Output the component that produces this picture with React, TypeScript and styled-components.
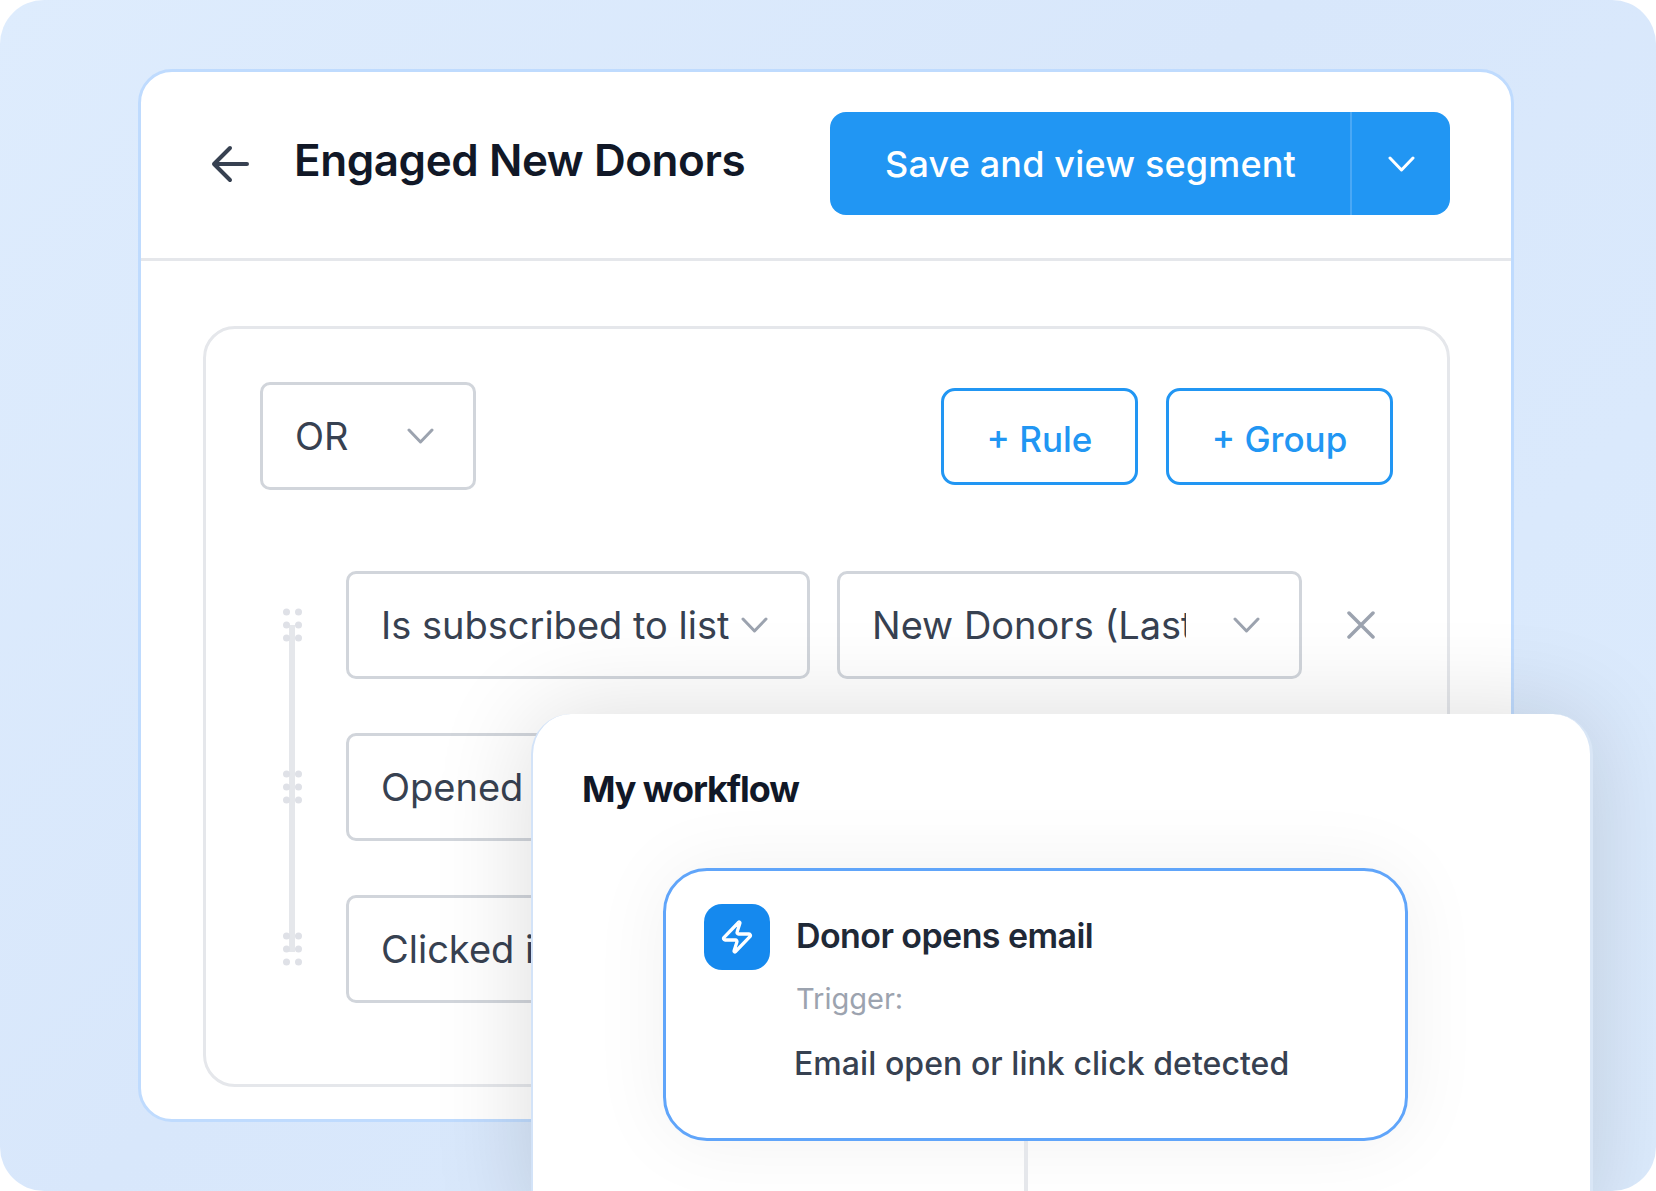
import React from 'react';
import styled, { createGlobalStyle } from 'styled-components';
import { Zap } from 'lucide-react';

const GlobalStyle = createGlobalStyle`
  html, body {
    margin: 0;
    padding: 0;
    background: #fff;
  }

  * {
    box-sizing: border-box;
  }
`;

const Page = styled.div`
  position: relative;
  width: 1656px;
  height: 1191px;
  padding: 69px 142px 0 138px;
  overflow: hidden;
  border-radius: 44px;
  background: linear-gradient(135deg, #deecfd 0%, #d8e7fb 45%, #dcebfd 100%);
  font-family: Inter, 'Noto Sans', sans-serif;
`;

const Card = styled.div`
  width: 1376px;
  height: 1053px;
  background: #fff;
  border: 3px solid #bfdbfe;
  border-radius: 34px;
`;

const Header = styled.header`
  height: 189px;
  display: flex;
  align-items: center;
  padding: 0 61px 3px 70px;
  border-bottom: 3px solid #e5e7eb;
`;

const BackIcon = styled.svg`
  width: 38px;
  height: 38px;
  flex: none;
  margin-right: 45px;
  color: #374151;
`;

const Title = styled.h1`
  margin: 0 0 8px;
  font-size: 44px;
  font-weight: 600;
  letter-spacing: -0.01em;
  color: #111827;
`;

const SplitButton = styled.div`
  display: flex;
  width: 620px;
  height: 103px;
  margin-left: auto;
  border-radius: 16px;
  background: #2196f3;
  color: #fff;
`;

const SplitLabel = styled.div`
  flex: 1;
  display: flex;
  align-items: center;
  padding-left: 55px;
  border-right: 2px solid #4aa8f5;
  font-size: 36px;
  font-weight: 500;
  letter-spacing: 0.17px;
`;

const SplitCaret = styled.div`
  width: 98px;
  display: flex;
  align-items: center;
  justify-content: center;
`;

const Body = styled.div`
  padding: 65px 61px 0 62px;
`;

const Panel = styled.section`
  height: 761px;
  padding: 53px 54px 0;
  border: 3px solid #e5e7eb;
  border-radius: 32px;
`;

const Toolbar = styled.div`
  display: flex;
  align-items: center;
  justify-content: space-between;
  margin-bottom: 81px;
`;

const Select = styled.div<{ $width: number }>`
  display: flex;
  align-items: center;
  justify-content: space-between;
  flex: none;
  width: ${(p) => p.$width}px;
  height: 108px;
  padding: 0 39px 0 32px;
  background: #fff;
  border: 3px solid #d1d5db;
  border-radius: 10px;
  font-size: 38px;
  color: #374151;
`;

const SelectText = styled.span<{ $clip?: number }>`
  display: block;
  white-space: nowrap;
  overflow: hidden;
  ${(p) => (p.$clip ? `width: ${p.$clip}px;` : '')}
`;

const ActionGroup = styled.div`
  display: flex;
  gap: 28px;
`;

const OutlineButton = styled.button<{ $width: number }>`
  width: ${(p) => p.$width}px;
  height: 97px;
  padding: 5px 0 0;
  background: #fff;
  border: 3px solid #2196f3;
  border-radius: 14px;
  font-family: inherit;
  font-size: 35px;
  font-weight: 500;
  color: #2196f3;
`;

const RuleList = styled.div`
  position: relative;
  display: flex;
  flex-direction: column;
  gap: 54px;
  padding-left: 23px;

  &::before {
    content: '';
    position: absolute;
    left: 29px;
    top: 54px;
    width: 6px;
    height: 327px;
    background: #e5e7eb;
  }
`;

const Row = styled.div`
  display: flex;
  align-items: center;
  gap: 27px;
`;

const Grip = styled.svg`
  position: relative;
  flex: none;
  width: 19px;
  height: 34px;
  margin-right: 17px;
  fill: #dfe1e7;
`;

const Close = styled.svg`
  flex: none;
  width: 28px;
  height: 28px;
  margin-left: 18px;
  color: #9ca3af;
`;

const Overlay = styled.section`
  position: absolute;
  left: 531px;
  top: 714px;
  width: 1062px;
  height: 520px;
  padding: 53px 0 0 49px;
  background: #fff;
  border-left: 2px solid #d3e3f8;
  border-right: 3px solid #d9e6f6;
  border-radius: 40px;
  box-shadow: 0 0 100px rgba(0, 0, 0, 0.14);
`;

const OverlayTitle = styled.h2`
  margin: 0 0 57px;
  font-size: 36px;
  line-height: 44px;
  font-weight: 700;
  letter-spacing: -0.03em;
  color: #111827;
`;

const Node = styled.div`
  display: flex;
  gap: 26px;
  width: 745px;
  height: 273px;
  margin-left: 81px;
  padding: 33px 38px;
  background: #fff;
  border: 3px solid #60a5fa;
  border-radius: 44px;
  box-shadow: 0 0 80px rgba(0, 0, 0, 0.06);
`;

const NodeIcon = styled.div`
  flex: none;
  width: 66px;
  height: 66px;
  display: flex;
  align-items: center;
  justify-content: center;
  border-radius: 18px;
  background: #1589ee;
  color: #fff;
`;

const NodeText = styled.div`
  display: flex;
  flex-direction: column;
`;

const NodeTitle = styled.div`
  margin-top: -1px;
  font-size: 34px;
  line-height: 66px;
  font-weight: 600;
  letter-spacing: -0.017em;
  color: #1f2937;
`;

const NodeLabel = styled.div`
  margin-top: 10px;
  font-size: 29px;
  line-height: 40px;
  color: #9ca3af;
`;

const NodeDetail = styled.div`
  margin: 23px 0 0 -2px;
  font-size: 32px;
  line-height: 44px;
  font-weight: 500;
  letter-spacing: 0.06px;
  color: #374151;
`;

const Connector = styled.div`
  width: 4px;
  height: 60px;
  margin-left: 442px;
  background: #e5e7eb;
`;

const Chevron = ({ color = '#9ca3af' }: { color?: string }) => (
  <svg width="27" height="16" viewBox="0 0 27 16" fill="none" stroke={color} strokeWidth="3" strokeLinecap="round" strokeLinejoin="round">
    <path d="M2 2l11.5 12L25 2" />
  </svg>
);

const GripDots = () => (
  <Grip viewBox="0 0 19 34">
    {[4, 17, 30].map((y) => (
      <React.Fragment key={y}>
        <circle cx="3.5" cy={y} r="3.5" />
        <circle cx="15.5" cy={y} r="3.5" />
      </React.Fragment>
    ))}
  </Grip>
);

export default function App() {
  return (
    <Page>
      <GlobalStyle />
      <Card>
        <Header>
          <BackIcon viewBox="0 0 38 38" fill="none" stroke="currentColor" strokeWidth="4" strokeLinecap="round" strokeLinejoin="round">
            <path d="M19 3L3 19l16 16M3 19h33" />
          </BackIcon>
          <Title>Engaged New Donors</Title>
          <SplitButton>
            <SplitLabel>Save and view segment</SplitLabel>
            <SplitCaret>
              <Chevron color="#fff" />
            </SplitCaret>
          </SplitButton>
        </Header>
        <Body>
          <Panel>
            <Toolbar>
              <Select $width={216}>
                <SelectText>OR</SelectText>
                <Chevron />
              </Select>
              <ActionGroup>
                <OutlineButton $width={197}>+ Rule</OutlineButton>
                <OutlineButton $width={227}>+ Group</OutlineButton>
              </ActionGroup>
            </Toolbar>
            <RuleList>
              <Row>
                <GripDots />
                <Select $width={464}>
                  <SelectText>Is subscribed to list</SelectText>
                  <Chevron />
                </Select>
                <Select $width={465}>
                  <SelectText $clip={314}>New Donors (Last</SelectText>
                  <Chevron />
                </Select>
                <Close viewBox="0 0 28 28" fill="none" stroke="currentColor" strokeWidth="3.5" strokeLinecap="round">
                  <path d="M2 2l24 24M26 2L2 26" />
                </Close>
              </Row>
              <Row>
                <GripDots />
                <Select $width={464}>
                  <SelectText>Opened</SelectText>
                </Select>
              </Row>
              <Row>
                <GripDots />
                <Select $width={464}>
                  <SelectText>Clicked i</SelectText>
                </Select>
              </Row>
            </RuleList>
          </Panel>
        </Body>
      </Card>
      <Overlay>
        <OverlayTitle>My workflow</OverlayTitle>
        <Node>
          <NodeIcon>
            <Zap size={36} strokeWidth={2.2} />
          </NodeIcon>
          <NodeText>
            <NodeTitle>Donor opens email</NodeTitle>
            <NodeLabel>Trigger:</NodeLabel>
            <NodeDetail>Email open or link click detected</NodeDetail>
          </NodeText>
        </Node>
        <Connector />
      </Overlay>
    </Page>
  );
}
